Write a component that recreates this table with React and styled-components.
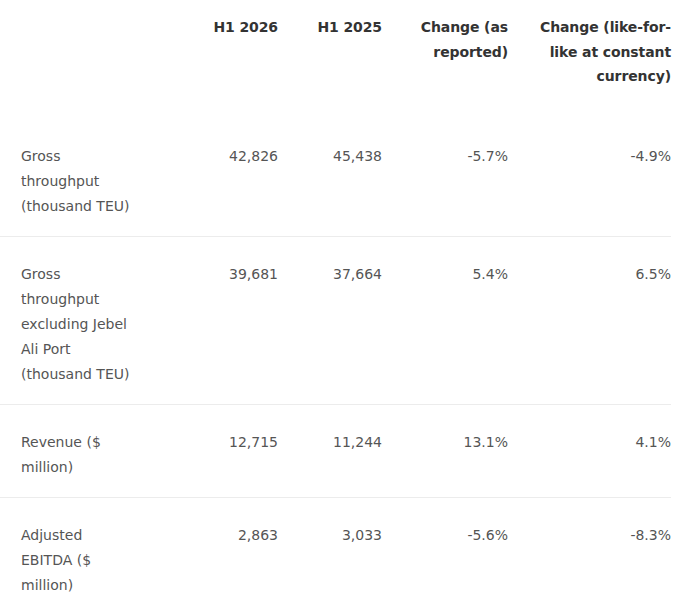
import React from 'react';
import styled, { createGlobalStyle } from 'styled-components';

const rows = [
  { label: 'Gross throughput (thousand TEU)', h1: '42,826', h2: '45,438', rep: '-5.7%', lfl: '-4.9%' },
  { label: 'Gross throughput excluding Jebel Ali Port (thousand TEU)', h1: '39,681', h2: '37,664', rep: '5.4%', lfl: '6.5%' },
  { label: 'Revenue ($ million)', h1: '12,715', h2: '11,244', rep: '13.1%', lfl: '4.1%' },
  { label: 'Adjusted EBITDA ($ million)', h1: '2,863', h2: '3,033', rep: '-5.6%', lfl: '-8.3%' },
];

const App = () => {
  return (
    <>
      <GlobalStyle />
      <Table>
        <colgroup>
          <col style={{ width: 150 }} />
          <col style={{ width: 128 }} />
          <col style={{ width: 104 }} />
          <col style={{ width: 126 }} />
          <col style={{ width: 163 }} />
        </colgroup>
        <thead>
          <tr>
            <Head first />
            <Head>H1 2026</Head>
            <Head>H1 2025</Head>
            <Head>Change (as reported)</Head>
            <Head wide>Change (like-for-like at constant currency)</Head>
          </tr>
        </thead>
        <tbody>
          {rows.map((r) => (
            <Row key={r.label}>
              <Cell first>{r.label}</Cell>
              <Cell>{r.h1}</Cell>
              <Cell>{r.h2}</Cell>
              <Cell>{r.rep}</Cell>
              <Cell wide>{r.lfl}</Cell>
            </Row>
          ))}
        </tbody>
      </Table>
    </>
  );
};

export default App;

const GlobalStyle = createGlobalStyle`
  body {
    margin: 0;
    background: #ffffff;
    font-family: "DejaVu Sans", "Liberation Sans", sans-serif;
  }
`;

const Table = styled.table`
  width: 671px;
  table-layout: fixed;
  border-collapse: collapse;
  border-spacing: 0;
`;

const Head = styled.th`
  padding: 15px 0 30px ${({ first, wide }) => (first ? '21px' : wide ? '23px' : '16px')};
  text-align: ${({ first }) => (first ? 'left' : 'right')};
  vertical-align: top;
  font-size: 14px;
  line-height: 24.5px;
  font-weight: 700;
  color: #333333;
  letter-spacing: -0.1px;
`;

const Row = styled.tr`
  border-bottom: 1px solid #ececec;
`;

const Cell = styled.td`
  padding: 25px ${({ first }) => (first ? '16px' : '0')} 17px
    ${({ first, wide }) => (first ? '21px' : wide ? '23px' : '16px')};
  text-align: ${({ first }) => (first ? 'left' : 'right')};
  vertical-align: top;
  font-size: 14px;
  line-height: 25px;
  font-weight: 400;
  color: #555555;
`;
